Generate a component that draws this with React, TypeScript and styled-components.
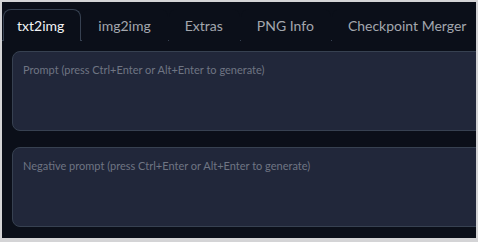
import React from "react";
import styled, { createGlobalStyle } from "styled-components";

const Global = createGlobalStyle`
  html, body { margin: 0; padding: 0; background: #d4d4d6; }
  body { width: 478px; height: 242px; overflow: hidden; }
  * { box-sizing: border-box; }
`;

const Frame = styled.div`
  width: 478px;
  height: 242px;
  border-style: solid;
  border-color: #d4d4d6;
  border-width: 2px 2px 4px 2px;
  background: #0b0f19;
  font-family: "Lato", "Open Sans", sans-serif;
  overflow: hidden;
  display: flex;
  flex-direction: column;
`;

const TabBar = styled.div`
  display: flex;
  align-items: flex-end;
  padding: 8px 0 0 1px;
  border-bottom: 1px solid #374151;
  height: 39px;
  flex-shrink: 0;
`;

const Tab = styled.div<{ $active?: boolean }>`
  padding: 0 16px 0 ${(p) => (p.$active ? 13 : 15)}px;
  margin-right: 1px;
  display: flex;
  align-items: center;
  font-size: 14px;
  white-space: nowrap;
  color: ${(p) => (p.$active ? "#f3f4f6" : "#a3a7ae")};
  border: 1px solid ${(p) => (p.$active ? "#374151" : "transparent")};
  border-bottom: none;
  border-radius: 8px 8px 0 0;
  background: #0b0f19;
  margin-bottom: -1px;
  height: 32px;
`;

const Panel = styled.div`
  display: flex;
  flex-direction: column;
  gap: 16px;
  padding: 10px 0 0 10px;
  width: 520px;
`;

const PromptBox = styled.div`
  height: 80px;
  border: 1px solid #374151;
  border-radius: 8px;
  background: #21273a;
  padding: 11px 10px;
  font-size: 11px;
  color: #6f7583;
`;

export default function App() {
  const tabs = ["txt2img", "img2img", "Extras", "PNG Info", "Checkpoint Merger"];
  return (
    <>
      <Global />
      <Frame>
        <TabBar>
          {tabs.map((t, i) => (
            <Tab key={t} $active={i === 0}>
              {t}
            </Tab>
          ))}
        </TabBar>
        <Panel>
          <PromptBox>Prompt (press Ctrl+Enter or Alt+Enter to generate)</PromptBox>
          <PromptBox>Negative prompt (press Ctrl+Enter or Alt+Enter to generate)</PromptBox>
        </Panel>
      </Frame>
    </>
  );
}
